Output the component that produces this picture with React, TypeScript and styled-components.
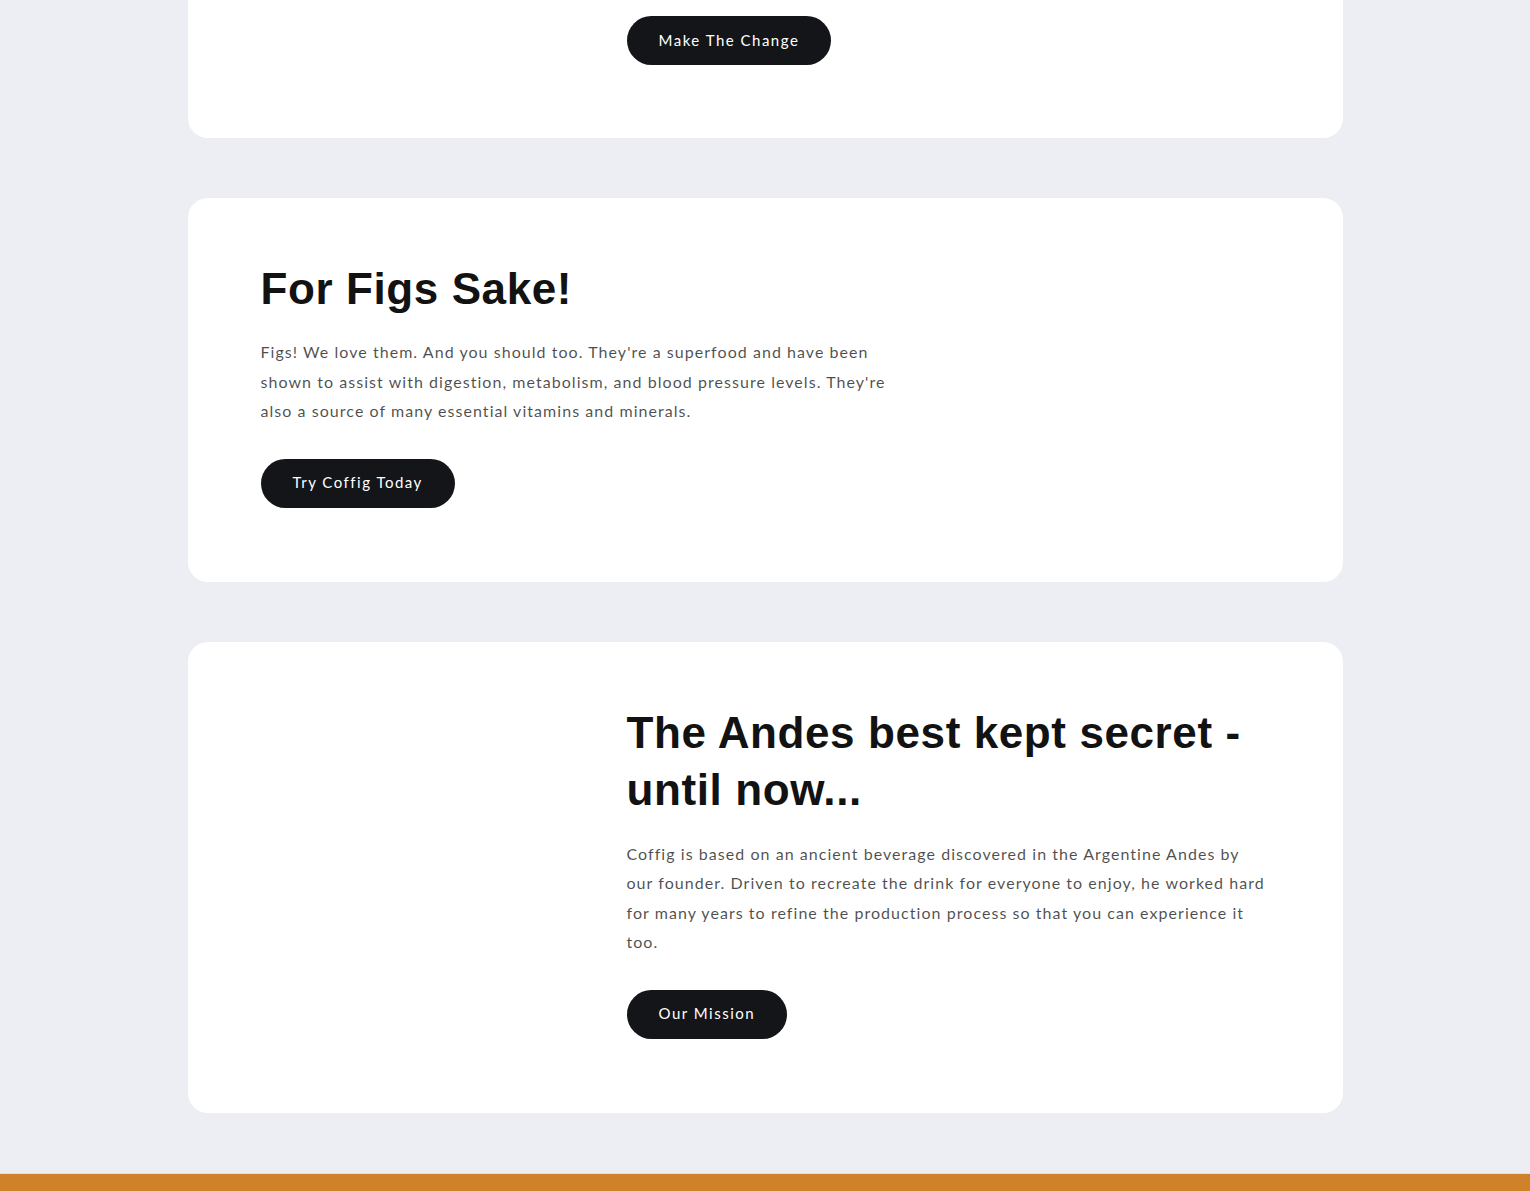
import React from "react";
import styled, { createGlobalStyle } from "styled-components";

const GlobalStyle = createGlobalStyle`
  html, body {
    margin: 0;
    padding: 0;
    background: #edeef4;
    overflow: hidden;
  }
  body {
    font-family: "Lato", "Liberation Sans", sans-serif;
  }
`;

type Section = {
  title: string;
  text: string;
  button: string;
  reverse?: boolean;
};

const sections: Section[] = [
  {
    title: "For Figs Sake!",
    text: "Figs! We love them. And you should too. They're a superfood and have been shown to assist with digestion, metabolism, and blood pressure levels. They're also a source of many essential vitamins and minerals.",
    button: "Try Coffig Today",
  },
  {
    title: "The Andes best kept secret - until now...",
    text: "Coffig is based on an ancient beverage discovered in the Argentine Andes by our founder. Driven to recreate the drink for everyone to enjoy, he worked hard for many years to refine the production process so that you can experience it too.",
    button: "Our Mission",
    reverse: true,
  },
];

export default function App() {
  return (
    <>
      <GlobalStyle />
      <Page>
        <TopCard>
          <TopInner>
            <PillButton>Make The Change</PillButton>
          </TopInner>
        </TopCard>

        {sections.map((s) => (
          <Card key={s.title} $reverse={s.reverse}>
            <Media />
            <Content $reverse={s.reverse}>
              <Heading>{s.title}</Heading>
              <Body>{s.text}</Body>
              <PillButton>{s.button}</PillButton>
            </Content>
          </Card>
        ))}
      </Page>
      <Footer />
    </>
  );
}

const Page = styled.main`
  width: 1155px;
  margin: 0 auto;
  display: flex;
  flex-direction: column;
  gap: 60px;
  padding-bottom: 60px;
`;

const TopCard = styled.section`
  background: #ffffff;
  border-radius: 20px;
  margin-top: -60px;
  padding: 76px 0 73px;
`;

const TopInner = styled.div`
  padding-left: 439px;
`;

const Card = styled.section<{ $reverse?: boolean }>`
  background: #ffffff;
  border-radius: 20px;
  display: grid;
  grid-template-columns: ${(p) => (p.$reverse ? "385px 1fr" : "1fr 385px")};
`;

const Media = styled.div`
  min-height: 100px;
`;

const Content = styled.div<{ $reverse?: boolean }>`
  grid-row: 1;
  grid-column: ${(p) => (p.$reverse ? 2 : 1)};
  padding: ${(p) => (p.$reverse ? "62px 73px 74.5px 54px" : "62px 54px 74.5px 73px")};
  display: flex;
  flex-direction: column;
  align-items: flex-start;
`;

const Heading = styled.h2`
  margin: 0;
  font-family: "Liberation Sans", Arial, sans-serif;
  font-weight: 700;
  font-size: 44px;
  line-height: 1.3;
  letter-spacing: 0.6px;
  color: #121212;
`;

const Body = styled.p`
  margin: 20px 0 33px;
  font-size: 16px;
  line-height: 29.5px;
  letter-spacing: 1.05px;
  color: rgba(18, 18, 18, 0.75);
`;

const PillButton = styled.a`
  display: inline-flex;
  align-items: center;
  justify-content: center;
  height: 49px;
  padding: 0 32px 2px;
  box-sizing: border-box;
  border-radius: 25px;
  background: #141518;
  color: #ffffff;
  font-size: 15px;
  letter-spacing: 1.5px;
  cursor: pointer;
`;

const Footer = styled.footer`
  height: 40px;
  background: #cf8229;
  border-top: 1px solid #f3dcc0;
`;
